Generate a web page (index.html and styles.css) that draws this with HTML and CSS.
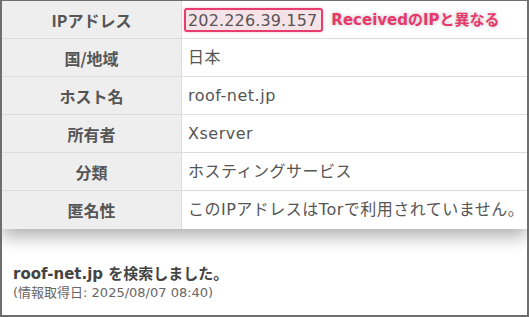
FILE: index.html
```html
<!DOCTYPE html>
<html lang="ja">
<head>
<meta charset="utf-8">
<link rel="stylesheet" href="styles.css">
</head>
<body>
<div class="frame">
  <table class="info">
    <tr>
      <th>IPアドレス</th>
      <td><span class="ip">202.226.39.157</span><span class="note">ReceivedのIPと異なる</span></td>
    </tr>
    <tr><th>国/地域</th><td>日本</td></tr>
    <tr><th>ホスト名</th><td>roof-net.jp</td></tr>
    <tr><th>所有者</th><td>Xserver</td></tr>
    <tr><th>分類</th><td>ホスティングサービス</td></tr>
    <tr><th>匿名性</th><td>このIPアドレスはTorで利用されていません。</td></tr>
  </table>
  <div class="foot">
    <p class="searched">roof-net.jp を検索しました。</p>
    <p class="date">(情報取得日: 2025/08/07 08:40)</p>
  </div>
</div>
</body>
</html>
```

FILE: styles.css
```css
html, body {
  margin: 0;
  padding: 0;
  background: #fff;
}
.frame {
  box-sizing: border-box;
  width: 529px;
  height: 317px;
  border: 2px solid #6e6e6e;
  border-top-width: 1px;
  background: #fff;
  font-family: "DejaVu Sans", "Noto Sans CJK JP", sans-serif;
  color: #555;
  overflow: hidden;
}
.info {
  width: 100%;
  border-collapse: collapse;
  box-shadow: 0 8px 16px rgba(0,0,0,0.3);
}
.info th, .info td {
  height: 37px;
  padding: 0;
  border-bottom: 1px solid #dcdcdc;
  font-size: 16px;
  line-height: 20px;
}
.info tr:last-child th, .info tr:last-child td {
  border-bottom: none;
  height: 38px;
}
.info th {
  width: 179px;
  background: #eeeeee;
  border-right: 1px solid #dcdcdc;
  font-weight: bold;
  color: #555;
  text-align: center;
  font-family: "Noto Sans CJK JP", sans-serif;
}
.info td {
  padding-left: 6px;
  text-align: left;
  font-weight: normal;
  letter-spacing: 0.5px;
}
.ip {
  display: inline-block;
  margin-left: -4px;
  padding: 1px 4px 0 2px;
  border: 2px solid #e63d6f;
  border-radius: 3px;
  background: #f6e3e8;
  line-height: 19px;
  letter-spacing: 0.15px;
  box-shadow: 0 0 3px rgba(230,61,111,0.35);
}
.note {
  margin-left: 8px;
  font-size: 15px;
  font-weight: bold;
  letter-spacing: 0;
  color: #e8386c;
  text-shadow: 0 0 4px rgba(0,0,0,0.25);
  vertical-align: 1px;
}
.foot {
  padding: 35px 0 0 11px;
}
.foot p {
  margin: 0;
}
.searched {
  font-size: 15px;
  font-weight: bold;
  line-height: 20px;
  color: #444;
}
.date {
  margin-top: 11px;
  font-size: 13px;
  line-height: 18px;
  color: #666;
}
```
